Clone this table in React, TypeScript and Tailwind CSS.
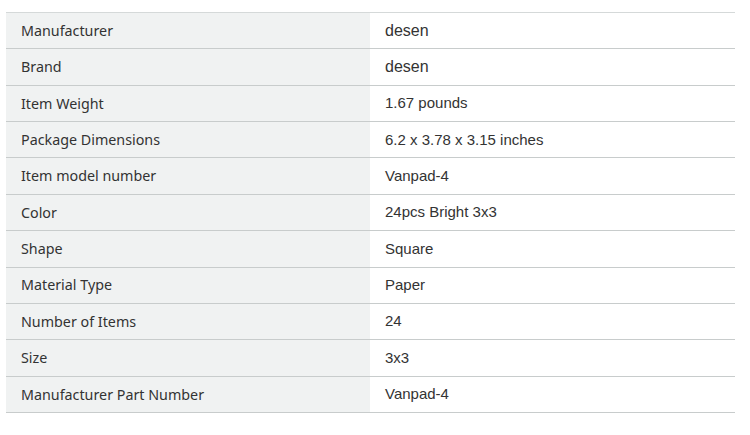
const rows: [string, string][] = [
  ["Manufacturer", "desen"],
  ["Brand", "desen"],
  ["Item Weight", "1.67 pounds"],
  ["Package Dimensions", "6.2 x 3.78 x 3.15 inches"],
  ["Item model number", "Vanpad-4"],
  ["Color", "24pcs Bright 3x3"],
  ["Shape", "Square"],
  ["Material Type", "Paper"],
  ["Number of Items", "24"],
  ["Size", "3x3"],
  ["Manufacturer Part Number", "Vanpad-4"],
]

export default function App() {
  return (
    <div className="w-[750px] h-[435px] bg-white pt-[12px] pl-[6px]">
      <div className="w-[729px] border-t border-[#d5d9d9]">
        {rows.map(([label, value], i) => (
          <div key={label} className="flex h-[36.36px] border-b border-[#c8cccc]">
            <div className="w-[364px] bg-[#f0f2f2] flex items-center pl-[15px] text-[14.3px] text-[#333] font-['Noto_Sans',sans-serif]">
              {label}
            </div>
            <div
              className={`flex-1 flex items-center pl-[15px] text-[#333] font-['Liberation_Sans',Arial,sans-serif] ${
                i < 2 ? "text-[16px]" : "text-[15px]"
              }`}
            >
              {value}
            </div>
          </div>
        ))}
      </div>
    </div>
  )
}
